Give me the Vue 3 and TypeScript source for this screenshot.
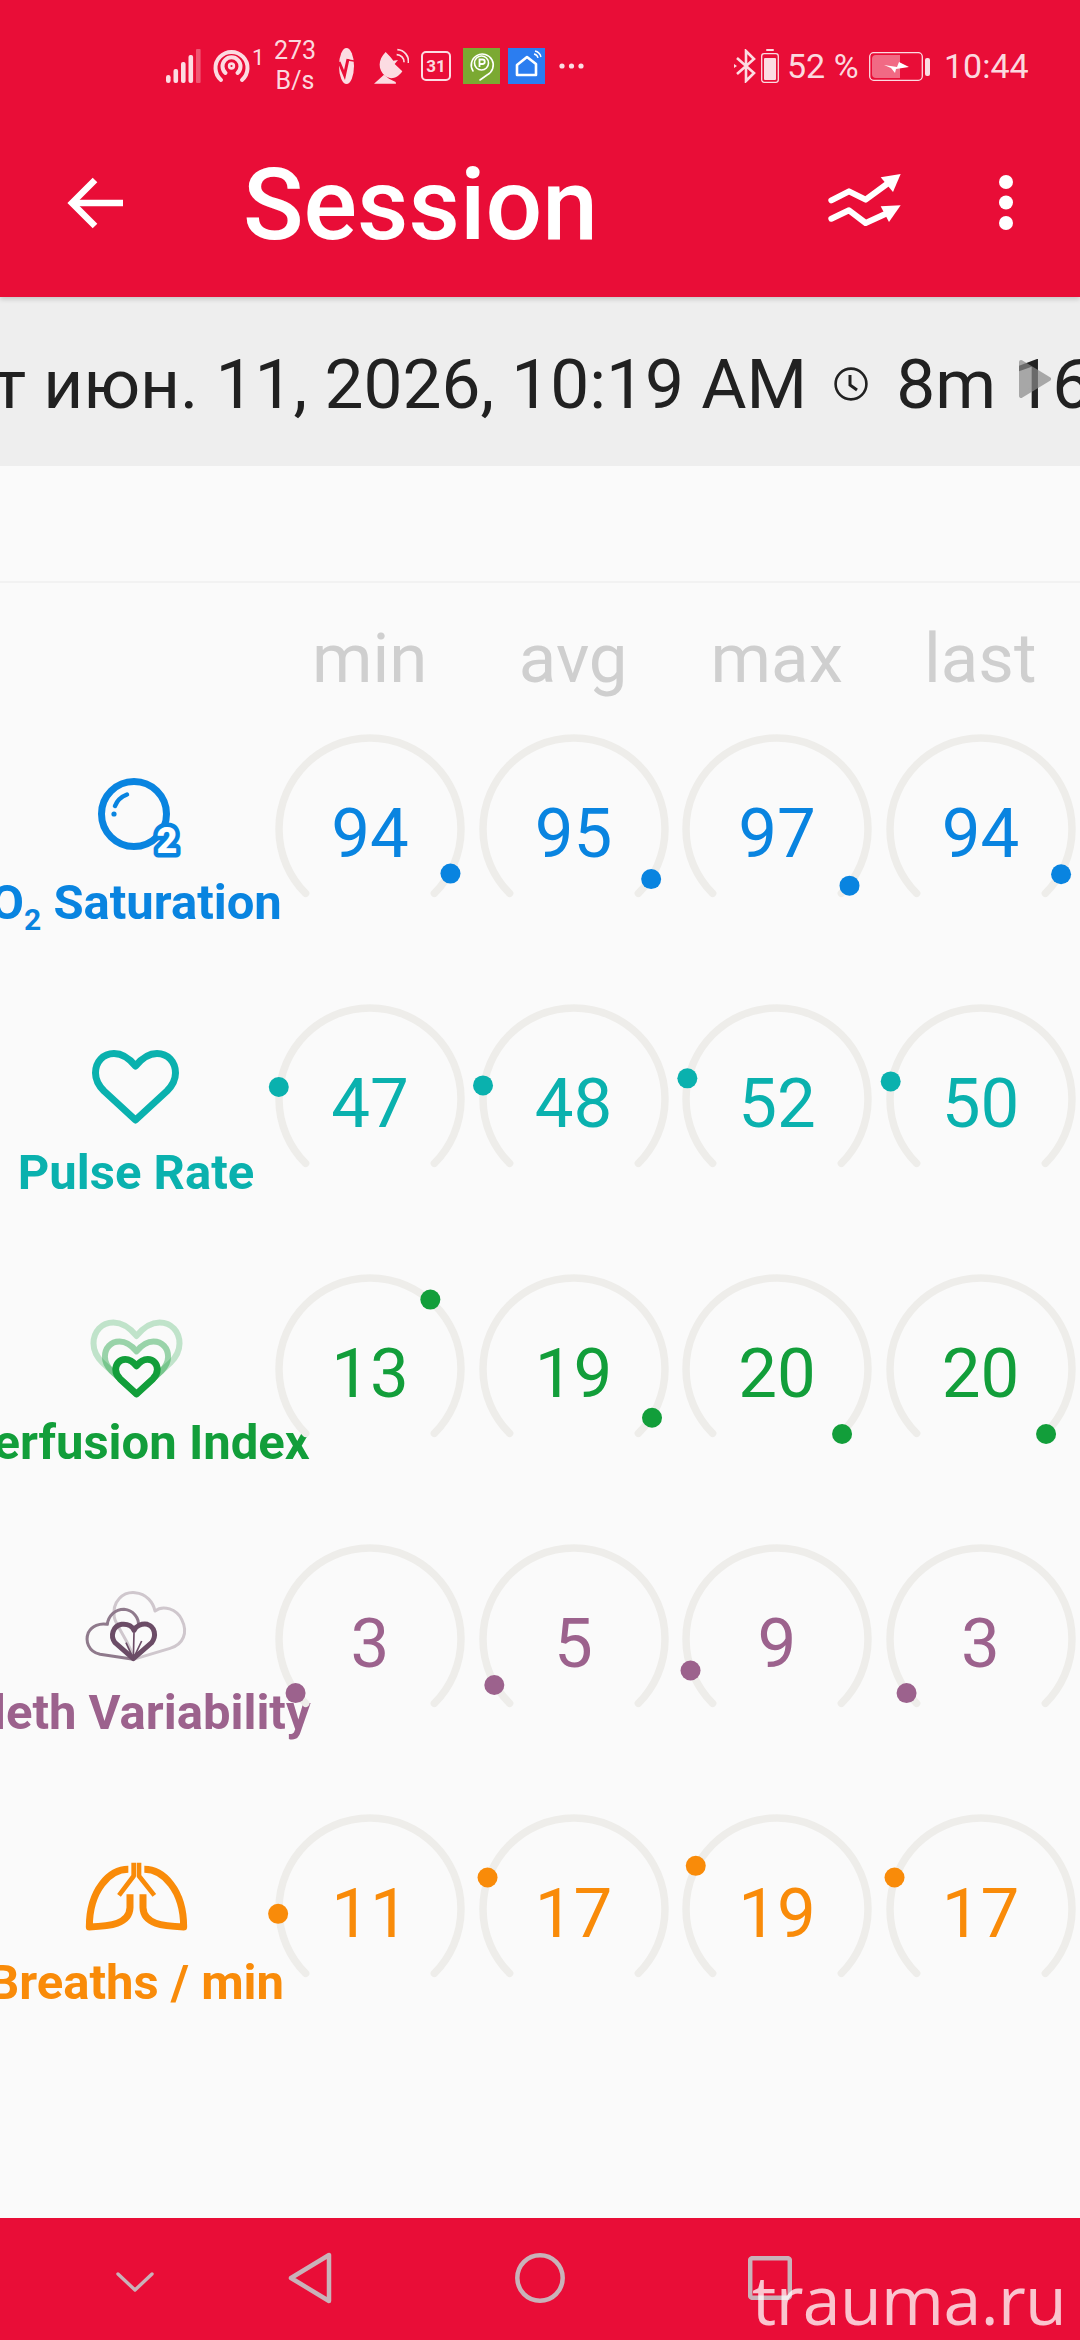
<script setup lang="ts">
interface Metric {
  key: string;
  label: string;
  color: string;
  values: number[];
  angles: number[];
}

const columns = ["min", "avg", "max", "last"];

const metrics: Metric[] = [
  { key: "spo2", label: "Saturation", color: "#0984e0", values: [94, 95, 97, 94], angles: [119, 123, 128, 119.5] },
  { key: "pulse", label: "Pulse Rate", color: "#0ab1ae", values: [47, 48, 52, 50], angles: [-82.5, -81.5, -77, -79] },
  { key: "pi", label: "Perfusion Index", color: "#129e3a", values: [13, 19, 20, 20], angles: [41, 122, 135, 135] },
  { key: "pleth", label: "Pleth Variability", color: "#9c628d", values: [3, 5, 9, 3], angles: [-126, -120, -110, -126] },
  { key: "rr", label: "Breaths / min", color: "#f98b09", values: [11, 17, 19, 17], angles: [-93, -70, -62, -70] },
];

const heart =
  "M54.5 20C48 12 41 7.5 33 7.5C22 7.5 14.5 16 14.5 27C14.5 35 18 40 23 45L54.5 74L86 45C91 40 94.5 35 94.5 27C94.5 16 87 7.5 76 7.5C68 7.5 61 12 54.5 20Z";

function dotX(angle: number) {
  return 102 + 92 * Math.sin((angle * Math.PI) / 180);
}

function dotY(angle: number) {
  return 102 - 92 * Math.cos((angle * Math.PI) / 180);
}
</script>

<template>
  <div class="screen">
    <header class="appbar">
      <div class="status">
        <svg class="si" width="35" height="34" viewBox="0 0 35 34" fill="currentColor">
          <rect x="0" y="26" width="4.6" height="8" rx="2.3" />
          <rect x="7.5" y="20" width="4.6" height="14" rx="2" />
          <rect x="15" y="13" width="4.6" height="21" rx="2" />
          <rect x="22.5" y="6" width="4.6" height="28" rx="2" />
          <rect x="30" y="0" width="4.6" height="34" rx="1" opacity="0.35" />
        </svg>
        <svg class="si hotspot" width="37" height="34" viewBox="0 0 37 34" fill="none" stroke="currentColor" stroke-width="4" stroke-linecap="round">
          <path d="M8 31A16 16 0 1 1 29 31" />
          <path d="M12.5 24A9 9 0 1 1 24.5 24" />
          <circle cx="18.5" cy="17" r="2.4" stroke-width="2.6" />
        </svg>
        <span class="sim">1</span>
        <span class="speed">273<br />B/s</span>
        <svg class="si vee" width="15" height="36" viewBox="0 0 15 36">
          <ellipse cx="7.5" cy="18" rx="7.5" ry="18" fill="currentColor" />
          <path d="M0 14L5.5 27L9 11" fill="none" stroke="#e90d37" stroke-width="3" />
          <path d="M9 12L15 13" fill="none" stroke="#e90d37" stroke-width="1.6" />
        </svg>
        <svg class="si sat" width="35" height="36" viewBox="0 0 105 108" fill="currentColor">
          <path d="M35 12C12 35 10 65 35 85C50 95 70 92 85 70L62 48L72 36L58 38L50 28Z" />
          <path d="M30 80L45 92L65 102L66 107H0Z" />
          <path d="M70 5A35 35 0 0 1 103 45M68 20A22 22 0 0 1 90 43" fill="none" stroke="currentColor" stroke-width="5" />
        </svg>
        <div class="cal">31</div>
        <svg class="si park" width="37" height="36" viewBox="0 0 37 36">
          <rect width="37" height="36" fill="#7ba932" />
          <path d="M10 23A11 11 0 1 1 24 27L17 32" fill="none" stroke="#fff" stroke-width="1.6" stroke-linecap="round" />
          <circle cx="18.5" cy="15" r="7" fill="none" stroke="#fff" stroke-width="1.6" />
          <path d="M16.5 19V11.5H19.5A2.2 2.2 0 0 1 19.5 16H16.5" fill="none" stroke="#fff" stroke-width="1.8" />
        </svg>
        <svg class="si home" width="37" height="36" viewBox="0 0 37 36">
          <rect width="37" height="36" fill="#2b7df0" />
          <path d="M9 17L19 9L28 16V27H9Z" fill="none" stroke="#fff" stroke-width="2.6" stroke-linejoin="round" />
          <path d="M26 6A5 5 0 0 1 30 10M27 3A8 8 0 0 1 33 9" fill="none" stroke="#fff" stroke-width="1.3" />
        </svg>
        <svg class="si more" width="25" height="6" viewBox="0 0 25 6" fill="currentColor">
          <circle cx="3" cy="3" r="2.6" />
          <circle cx="12.5" cy="3" r="2.6" />
          <circle cx="22" cy="3" r="2.6" />
        </svg>
        <svg class="si bt" width="24" height="34" viewBox="0 0 24 34" fill="none" stroke="currentColor" stroke-width="2.6">
          <path d="M3 9L20 24L12 32V2L20 10L3 25" />
          <path d="M0 15L3 17L0 19Z" fill="currentColor" stroke="none" />
        </svg>
        <svg class="si batt" width="18" height="34" viewBox="0 0 18 34">
          <rect x="5" y="0" width="8" height="2" rx="1" fill="currentColor" />
          <rect x="0.7" y="4.7" width="16.6" height="28.6" rx="2.5" fill="none" stroke="currentColor" stroke-width="1.3" />
          <rect x="3" y="9" width="12" height="22" rx="1" fill="currentColor" />
        </svg>
        <span class="stext pct">52 %</span>
        <svg class="si charge" width="62" height="29" viewBox="0 0 62 29">
          <rect x="0.7" y="0.7" width="52.6" height="27.6" rx="4" fill="none" stroke="currentColor" stroke-width="1.3" />
          <path d="M3 7A4 4 0 0 1 7 3H31V26H7A4 4 0 0 1 3 22Z" fill="currentColor" opacity="0.45" />
          <path d="M15 13L28 15L30 10L40 15L27 17L26 21L22 16Z" fill="#fff" />
          <rect x="56" y="6" width="5" height="18" rx="2" fill="currentColor" />
        </svg>
        <span class="stext clock">10:44</span>
      </div>

      <div class="toolbar">
        <svg class="back" width="56" height="52" viewBox="0 0 56 52" fill="none" stroke="#fff" stroke-width="6.5" stroke-linejoin="miter">
          <path d="M56 26H6" />
          <path d="M28 3L5 26L28 49" />
        </svg>
        <h1 class="title">Session</h1>
        <svg class="trends" width="74" height="52" viewBox="0 0 222 156">
          <g transform="translate(-380,-458)">
            <path d="M390 537L443 510L493 535L565 482M390 592L443 567L493 605L565 572" fill="none" stroke="#fff" stroke-width="18" stroke-linecap="round" stroke-linejoin="round" />
            <path d="M538 468L598 458L575 512Z" fill="#fff" />
            <path d="M538 555L598 552L563 602Z" fill="#fff" />
          </g>
        </svg>
        <svg class="kebab" width="14" height="55" viewBox="0 0 14 55" fill="#fff">
          <circle cx="7" cy="7" r="7" />
          <circle cx="7" cy="27.5" r="7" />
          <circle cx="7" cy="48" r="7" />
        </svg>
      </div>
    </header>

    <div class="session">
      <span class="date">чт июн. 11, 2026, 10:19 AM</span>
      <svg class="clock-ico" width="34" height="34" viewBox="0 0 34 34" fill="none" stroke="#212121" stroke-width="2.6">
        <circle cx="17" cy="17" r="15.4" />
        <path d="M16 8V18L23 23" stroke-width="3" />
      </svg>
      <span class="duration">8m 16s</span>
      <svg class="play" width="34" height="40" viewBox="0 0 34 40">
        <path d="M3 3L31 20L3 37Z" fill="#8a8a8a" stroke="#8a8a8a" stroke-width="4" stroke-linejoin="round" />
      </svg>
    </div>

    <main class="body">
      <div class="spacer"></div>
      <div class="cols">
        <span v-for="c in columns" :key="c">{{ c }}</span>
      </div>

      <section v-for="m in metrics" :key="m.key" class="row">
        <div class="metric" :style="{ color: m.color }">
          <svg class="metric-ico" width="110" height="84" viewBox="0 0 110 84" fill="none">
            <template v-if="m.key === 'spo2'">
              <circle cx="53" cy="38" r="32.5" stroke="currentColor" stroke-width="7" />
              <path d="M34 30Q37 22 46 18.5" stroke="currentColor" stroke-width="4.5" stroke-linecap="round" />
              <circle cx="33" cy="38" r="2.6" fill="currentColor" />
              <text x="86" y="77" text-anchor="middle" class="badge" stroke="currentColor" stroke-width="9" stroke-linejoin="round" paint-order="stroke" fill="#fff">2</text>
            </template>
            <path v-else-if="m.key === 'pulse'" :d="heart" stroke="currentColor" stroke-width="7" stroke-linejoin="round" />
            <template v-else-if="m.key === 'pi'">
              <path :d="heart" transform="translate(55.5,78) scale(1.075) translate(-54.5,-74)" stroke="currentColor" stroke-width="5.6" stroke-opacity="0.25" stroke-linejoin="round" />
              <path :d="heart" transform="translate(55.5,78) scale(0.79) translate(-54.5,-74)" stroke="currentColor" stroke-width="7.6" stroke-opacity="0.42" stroke-linejoin="round" />
              <path :d="heart" transform="translate(55.5,78) scale(0.52) translate(-54.5,-74)" stroke="currentColor" stroke-width="13" stroke-linejoin="round" />
            </template>
            <g v-else-if="m.key === 'pleth'" transform="scale(0.3333) translate(-243,-75)" stroke-linejoin="round">
              <path d="M400 295C395 250 350 200 343 170C335 120 370 92 405 95C440 98 460 125 465 150C490 130 530 145 545 175C565 215 550 250 510 262Z" stroke="#cfc7cd" stroke-width="9" />
              <path d="M400 295L300 280C265 272 255 240 265 215C275 195 300 185 322 190C325 165 345 145 372 145C400 148 418 170 415 195" stroke="#8f7a8c" stroke-width="9" />
              <path d="M400 293L345 245C330 225 338 195 365 190C385 187 398 198 402 208C408 195 425 187 442 190C465 197 470 225 455 245Z" stroke="#6b4c66" stroke-width="15" />
              <path d="M400 293L402 215M400 293L378 245M400 293L425 240" stroke="#6b4c66" stroke-width="5" />
            </g>
            <g v-else transform="scale(0.3333) translate(-243,-885)" stroke="currentColor" stroke-width="21" stroke-linejoin="round" stroke-linecap="butt">
              <path d="M385 925C330 925 268 985 268 1098C330 1095 388 1090 390 1040V1000" />
              <path d="M433 925C488 925 551 985 551 1098C489 1095 431 1090 429 1040V1000" />
              <path d="M401 905V945L357 1003M417 905V945L463 1003" stroke-width="14" />
            </g>
          </svg>
          <div class="metric-name">
            <template v-if="m.key === 'spo2'">O<sub>2</sub>&nbsp;</template>{{ m.label }}
          </div>
        </div>

        <div v-for="(v, i) in m.values" :key="i" class="gauge" :style="{ color: m.color }">
          <svg class="dial" width="204" height="204" viewBox="0 0 204 204">
            <path d="M37.65 166.35A91 91 0 1 1 166.35 166.35" fill="none" stroke="#eeedea" stroke-width="7.5" stroke-linecap="round" />
            <circle :cx="dotX(m.angles[i])" :cy="dotY(m.angles[i])" r="10" fill="currentColor" />
          </svg>
          <span class="value">{{ v }}</span>
        </div>
      </section>
    </main>

    <footer class="nav">
      <svg class="nav-chev" width="38" height="20" viewBox="0 0 38 20" fill="none" stroke="#c9b2b9" stroke-width="3.4" stroke-linecap="round" stroke-linejoin="round">
        <path d="M2 2L19 18L36 2" />
      </svg>
      <svg class="nav-back" width="44" height="52" viewBox="0 0 44 52" fill="none" stroke="#c9b2b9" stroke-width="4.5" stroke-linejoin="round">
        <path d="M41 3V49L3 26Z" />
      </svg>
      <svg class="nav-home" width="50" height="50" viewBox="0 0 50 50" fill="none" stroke="#c9b2b9" stroke-width="4.5">
        <circle cx="25" cy="25" r="22.7" />
      </svg>
      <svg class="nav-recent" width="44" height="44" viewBox="0 0 44 44" fill="none" stroke="#c9b2b9" stroke-width="4.5" stroke-linejoin="round">
        <rect x="2.2" y="2.2" width="39.6" height="39.6" rx="2" />
      </svg>
      <span class="watermark">trauma.ru</span>
    </footer>
  </div>
</template>

<style scoped>
.screen {
  position: relative;
  width: 1080px;
  height: 2340px;
  overflow: hidden;
  display: flex;
  flex-direction: column;
  background: #fafafa;
  font-family: Roboto, "Noto Sans", sans-serif;
}

.appbar {
  position: relative;
  z-index: 2;
  height: 297px;
  flex: none;
  background: #e90d37;
  box-shadow: 0 2px 5px rgba(0, 0, 0, 0.18);
}

.status {
  height: 96px;
  box-sizing: border-box;
  padding: 36px 0 0 166px;
  display: flex;
  align-items: center;
  color: rgba(255, 255, 255, 0.86);
}
.si {
  flex: none;
}
.hotspot {
  margin-left: 12px;
}
.sim {
  align-self: flex-start;
  margin: 10px 0 0 2px;
  font-size: 22px;
  line-height: 24px;
  width: 9px;
}
.speed {
  width: 44px;
  margin-left: 12px;
  text-align: center;
  font-size: 25px;
  line-height: 30px;
}
.vee {
  margin-left: 22px;
}
.sat {
  margin-left: 20px;
}
.cal {
  flex: none;
  width: 30px;
  height: 30px;
  box-sizing: border-box;
  margin-left: 12px;
  border: 2px solid currentColor;
  border-radius: 5px;
  font-size: 17px;
  font-weight: 700;
  line-height: 26px;
  text-align: center;
}
.park {
  margin-left: 12px;
}
.home {
  margin-left: 8px;
}
.more {
  margin-left: 14px;
}
.bt {
  margin-left: 150px;
}
.batt {
  margin-left: 3px;
}
.stext {
  font-size: 34px;
  line-height: 40px;
  white-space: nowrap;
}
.pct {
  margin-left: 8px;
  width: 74px;
}
.charge {
  margin-left: 8px;
}
.clock {
  margin-left: 13px;
}

.toolbar {
  height: 201px;
  box-sizing: border-box;
  padding-top: 12px;
  display: flex;
  align-items: center;
}
.back {
  flex: none;
  margin-left: 67px;
}
.title {
  margin: 5px 0 0 120px;
  flex: 1;
  color: #fff;
  font-size: 100px;
  font-weight: 500;
  line-height: 110px;
}
.trends {
  flex: none;
  margin: -5px 0 0 2px;
}
.kebab {
  flex: none;
  margin: 0 67px 0 97px;
}

.session {
  position: relative;
  flex: none;
  height: 169px;
  display: flex;
  align-items: center;
  background: #eee;
  color: #212121;
  font-size: 69.4px;
  white-space: nowrap;
  padding-top: 5px;
  box-sizing: border-box;
}
.date {
  margin-left: -45px;
  flex: none;
}
.clock-ico {
  flex: none;
  margin-left: 27px;
}
.duration {
  flex: none;
  margin-left: 28px;
}
.play {
  position: absolute;
  left: 1018px;
  top: 62px;
  opacity: 0.7;
}

.body {
  flex: 1;
  min-height: 0;
}
.spacer {
  height: 117px;
  border-bottom: 2px solid #f2f2f2;
  box-sizing: border-box;
}
.cols {
  height: 111px;
  box-sizing: border-box;
  padding: 36px 0 0 268px;
  display: grid;
  grid-template-columns: repeat(4, 203.5px);
  color: #cfcfcf;
  font-size: 69px;
  line-height: 80px;
  text-align: center;
}

.row {
  height: 270px;
  display: grid;
  grid-template-columns: 268px repeat(4, 203.5px);
  align-items: center;
}
.metric {
  align-self: start;
  padding: 82px 0 0 4px;
  display: flex;
  flex-direction: column;
  align-items: center;
}
.metric-ico {
  flex: none;
  overflow: visible;
}
.badge {
  font-size: 36px;
  font-weight: 900;
}
.metric-name {
  margin-top: 14px;
  flex: none;
  font-size: 49px;
  font-weight: 700;
  line-height: 58px;
  white-space: nowrap;
}
.metric-name sub {
  font-size: 30px;
  line-height: 0;
}

.gauge {
  display: grid;
  place-items: center;
}
.dial,
.value {
  grid-area: 1 / 1;
}
.dial {
  overflow: visible;
}
.value {
  padding-top: 10px;
  font-size: 69px;
  line-height: 80px;
}

.nav {
  position: relative;
  flex: none;
  height: 122px;
  background: #e90d37;
  display: flex;
  align-items: center;
}
.nav-chev {
  flex: none;
  margin-left: 116px;
  margin-top: 6px;
}
.nav-back {
  flex: none;
  margin-left: 134px;
  margin-top: -2px;
}
.nav-home {
  flex: none;
  margin-left: 183px;
  margin-top: -2px;
}
.nav-recent {
  flex: none;
  margin-left: 183px;
  margin-top: -2px;
}
.watermark {
  position: absolute;
  left: 752px;
  top: 36px;
  color: rgba(255, 255, 255, 0.76);
  font-family: "Open Sans", sans-serif;
  font-size: 68px;
  font-weight: 400;
  letter-spacing: -0.6px;
  line-height: 90px;
  white-space: nowrap;
}
</style>

<style>
html,
body {
  margin: 0;
  background: #fafafa;
}
</style>
